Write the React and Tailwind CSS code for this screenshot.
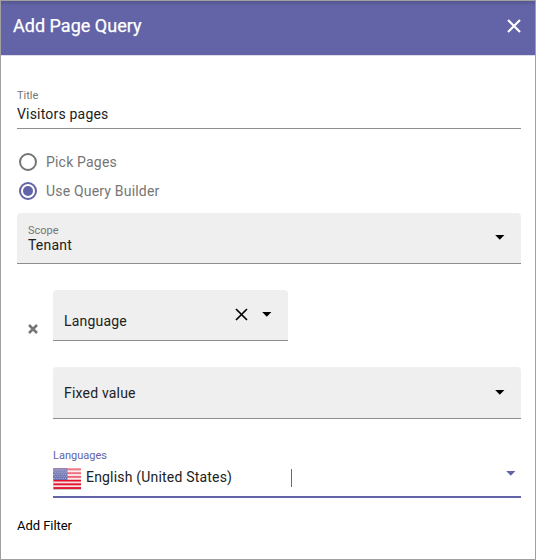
const Caret = ({ className }) => (
  <svg width="10" height="5" viewBox="0 0 10 5" className={className} fill="currentColor">
    <path d="M0.2 0H9.4L4.8 4.7Z" />
  </svg>
);

const Cross = ({ size, stroke }) => (
  <svg width={size} height={size} viewBox={`0 0 ${size} ${size}`} fill="none" stroke="currentColor" strokeWidth={stroke}>
    <path d={`M1 1L${size - 1} ${size - 1}M${size - 1} 1L1 ${size - 1}`} />
  </svg>
);

const Radio = ({ label, checked }) => (
  <div className="flex h-[29px] items-center text-[14px] leading-4 tracking-[0.19px] text-[#757575]">
    <span
      className={`ml-0.5 mr-[9px] flex size-[18px] items-center justify-center rounded-full border-2 ${
        checked ? "border-[#6264a7]" : "border-[#757575]"
      }`}
    >
      {checked && <span className="size-[10px] rounded-full bg-[#6264a7]" />}
    </span>
    {label}
  </div>
);

const STRIPES = Array.from({ length: 11 }, (_, i) => i);
const STARS = Array.from({ length: 30 }, (_, i) => i);

const Flag = () => (
  <svg width="28" height="22" viewBox="0 0 28 22">
    <defs>
      <linearGradient id="gloss" x1="0" y1="0" x2="0" y2="1">
        <stop offset="0" stopColor="#fff" stopOpacity=".45" />
        <stop offset="1" stopColor="#fff" stopOpacity=".3" />
      </linearGradient>
    </defs>
    <rect x="0" y="1" width="28" height="21" fill="#c9c9c9" />
    <rect x="0.5" y="0.5" width="27.5" height="20.5" fill="#f8dfe2" />
    {STRIPES.filter((i) => i % 2 === 0).map((i) => (
      <rect key={i} x="0.5" y={0.5 + i * 1.86} width="27.5" height="1.86" fill="#e3122d" />
    ))}
    <rect x="0.5" y="0.5" width="14" height="11.5" fill="#26308a" />
    {STARS.map((i) => (
      <circle key={i} cx={1.8 + (i % 6) * 2.1 + (Math.floor(i / 6) % 2) * 0.9} cy={1.9 + Math.floor(i / 6) * 2.15} r=".42" fill="#fff" />
    ))}
    <rect x="0.5" y="0.5" width="27.5" height="11.5" fill="url(#gloss)" />
  </svg>
);

export default function App() {
  return (
    <div className="flex h-[560px] w-[536px] flex-col border border-[#a0a0a0] bg-white font-[Roboto,sans-serif] text-[14px] leading-4 tracking-[0.19px] text-[#212121]">
      <header className="flex h-[55px] items-center justify-between border-b border-[#dcdcea] bg-[#6264a7] bg-linear-to-b from-[#55578f] from-0% to-[#6264a7] to-[5px] pl-3 pr-[14px] pb-1 text-white">
        <h1 className="text-[18px] font-normal leading-6 tracking-[0.02px] [-webkit-text-stroke:0.25px_white]">Add Page Query</h1>
        <Cross size={14} stroke={2.2} />
      </header>

      <main className="flex flex-col pl-4 pr-[14px]">
        <div className="mt-[34px] flex h-[39px] flex-col border-b border-[#8e8e8e]">
          <label className="text-[11px] leading-3 tracking-normal text-[#757575]">Title</label>
          <span className="mt-1">Visitors pages</span>
        </div>

        <div className="mt-[18px] flex flex-col">
          <Radio label="Pick Pages" />
          <Radio label="Use Query Builder" checked />
        </div>

        <div className="mt-2 flex h-[51px] items-center justify-between rounded-t border-b border-[#8e8e8e] bg-[#efefef] pl-[11px] pr-4">
          <div className="flex flex-col pt-0.5">
            <label className="text-[11px] leading-3 tracking-normal text-[#757575]">Scope</label>
            <span>Tenant</span>
          </div>
          <Caret className="mb-0.5 text-black" />
        </div>

        <div className="mt-[26px] flex">
          <div className="flex w-9 pl-[11px] pt-[34px] text-[#757575]">
            <Cross size={10} stroke={2.5} />
          </div>
          <div className="flex h-[51px] w-[235px] items-center rounded-t border-b border-[#8e8e8e] bg-[#efefef] pl-[11px] pr-4">
            <span className="mt-3 flex-1">Language</span>
            <div className="mb-0.5 flex items-center gap-[14px] text-black">
              <Cross size={13} stroke={1.7} />
              <Caret />
            </div>
          </div>
        </div>

        <div className="ml-9 mt-[26px] flex h-[52px] items-center justify-between rounded-t border-b border-[#8e8e8e] bg-[#efefef] pl-[11px] pr-4">
          <span>Fixed value</span>
          <Caret className="text-black" />
        </div>

        <div className="ml-9 mt-[31px] flex h-12 flex-col border-b-2 border-[#6264a7]">
          <label className="text-[11px] leading-3 tracking-normal text-[#6264a7]">Languages</label>
          <div className="mt-[6px] flex h-[22px] items-center">
            <Flag />
            <span className="ml-[5px] w-[205px] pb-[5px]">English (United States)</span>
            <span className="mb-0.5 h-[18px] w-px bg-[#6264a7]" />
            <Caret className="mb-3 ml-auto mr-[5px] text-[#6264a7]" />
          </div>
        </div>

        <button className="mt-5 self-start text-[13px] leading-4 tracking-[-0.05px] text-black">Add Filter</button>
      </main>
    </div>
  );
}
